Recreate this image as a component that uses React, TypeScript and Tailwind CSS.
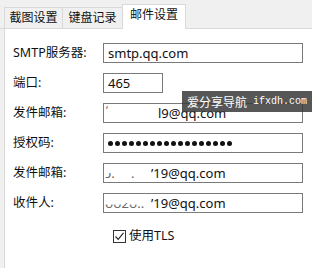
import React from "react";

const font = { fontFamily: '"Noto Sans", "Noto Sans CJK SC", sans-serif' } as React.CSSProperties;

function Frag({ text, left }: { text: string; left: number }) {
  return (
    <span
      className="absolute h-[7px] overflow-hidden text-[#6a6a6a]"
      style={{ left, top: 9 }}
    >
      <span className="block leading-[18px] -mt-[9px]">{text}</span>
    </span>
  );
}

function Row({ label, children, w = "w-[200px]" }: { label: string; children: React.ReactNode; w?: string }) {
  return (
    <div className="flex h-[20px] items-center">
      <div className="w-[90px] text-[12.5px] leading-[20px] text-[#111]">{label}</div>
      <div className={`relative h-[20px] ${w} border border-[#7a7a7a] bg-white text-[13px] leading-[18px] text-[#111]`}>
        {children}
      </div>
    </div>
  );
}

export default function App() {
  return (
    <div className="relative w-[312px] h-[268px] overflow-hidden bg-[#f0f0f0]" style={font}>
      {/* tabs */}
      <div className="flex h-[29px] items-end pl-[4px] border-b border-[#d9d9d9]">
        <div className="h-[21px] w-[59px] border border-b-0 border-[#d9d9d9] bg-[#f0f0f0] text-[12px] leading-[20px] text-center text-[#111]">截图设置</div>
        <div className="h-[21px] w-[60px] border border-l-0 border-b-0 border-[#d9d9d9] bg-[#f0f0f0] text-[12px] leading-[20px] text-center text-[#111]">键盘记录</div>
        <div className="relative -mb-px h-[25px] w-[64px] -ml-px border border-b-0 border-[#d9d9d9] bg-white text-[12px] leading-[20px] text-center text-[#111]">邮件设置</div>
      </div>
      {/* panel */}
      <div className="ml-[4px] h-[240px] border-l border-[#d9d9d9] bg-white pl-[8px] pt-[14px]">
        <div className="flex flex-col gap-[10px]">
          <Row label="SMTP服务器:">
            <span className="absolute left-[4px] top-0">smtp.qq.com</span>
          </Row>
          <Row label="端口:" w="w-[60px]">
            <span className="absolute left-[4px] top-0">465</span>
          </Row>
          <Row label="发件邮箱:">
            <span className="absolute left-[2px] top-[-3px] text-[#555] text-[10px]">‘</span>
            <span className="absolute left-[54px] top-0">l9@qq.com</span>
          </Row>
          <Row label="授权码:">
            <div className="absolute left-[4px] top-[7px] flex w-[124px] justify-between">
              {Array.from({ length: 18 }).map((_, i) => (
                <span key={i} className="block h-[5px] w-[5px] rounded-full bg-[#111]" />
              ))}
            </div>
          </Row>
          <Row label="发件邮箱:">
            <Frag text="ɔ." left={1} />
            <Frag text="." left={27} />
            <span className="absolute left-[47px] top-0">’19@qq.com</span>
          </Row>
          <Row label="收件人:">
            <Frag text="ᴗᴗ2ᴗ.." left={1} />
            <span className="absolute left-[47px] top-0">’19@qq.com</span>
          </Row>
        </div>
        <div className="mt-[15px] flex items-center pl-[100px]">
          <div className="flex h-[13px] w-[13px] items-center justify-center border border-[#333] bg-white">
            <svg width="11" height="11" viewBox="0 0 11 11">
              <path d="M1.5 5.5 L4.2 8.3 L9.5 1.8" fill="none" stroke="#222" strokeWidth="1.1" />
            </svg>
          </div>
          <span className="ml-[3px] text-[12.5px] leading-[16px] text-[#111]">使用TLS</span>
        </div>
      </div>
      {/* watermark */}
      <div className="absolute left-[182px] top-[91px] flex h-[21px] w-[130px] items-center bg-[rgba(58,58,58,0.85)] pl-[5px] text-white">
        <span className="text-[12px] leading-[14px]" style={{ fontFamily: '"Noto Sans CJK SC", sans-serif' }}>爱分享导航</span>
        <span className="ml-[6px] text-[10px] leading-[14px]" style={{ fontFamily: '"Liberation Mono", monospace' }}>ifxdh.com</span>
      </div>
    </div>
  );
}
